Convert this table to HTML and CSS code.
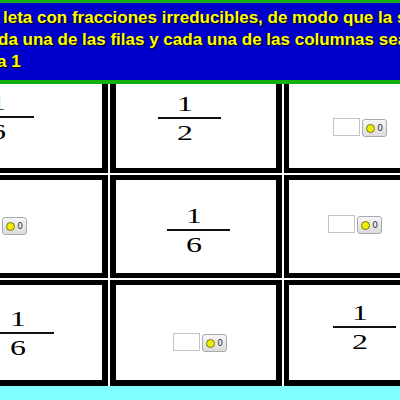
FILE: index.html
```html
<!DOCTYPE html>
<html lang="es">
<head>
<meta charset="utf-8">
<title>Fracciones</title>
<link rel="stylesheet" href="styles.css">
</head>
<body>
<div class="header">
  <div class="msg">
    <div class="line l1">leta con fracciones irreducibles, de modo que la suma de</div>
    <div class="line l2">da una de las filas y cada una de las columnas sea</div>
    <div class="line l3">a 1</div>
  </div>
</div>
<div class="board">
  <div class="cell c1 r1">
    <div class="frac f-r1c1"><span class="num">1</span><span class="bar"></span><span class="den">6</span></div>
  </div>
  <div class="cell c2 r1">
    <div class="frac f-r1c2"><span class="num">1</span><span class="bar"></span><span class="den">2</span></div>
  </div>
  <div class="cell c3 r1">
    <div class="widget w-r1c3"><span class="box"></span><span class="btn"><span class="dot"></span><span class="cnt">0</span></span></div>
  </div>

  <div class="cell c1 r2">
    <div class="widget w-r2c1"><span class="box"></span><span class="btn"><span class="dot"></span><span class="cnt">0</span></span></div>
  </div>
  <div class="cell c2 r2">
    <div class="frac f-r2c2"><span class="num">1</span><span class="bar"></span><span class="den">6</span></div>
  </div>
  <div class="cell c3 r2">
    <div class="widget w-r2c3"><span class="box"></span><span class="btn"><span class="dot"></span><span class="cnt">0</span></span></div>
  </div>

  <div class="cell c1 r3">
    <div class="frac f-r3c1"><span class="num">1</span><span class="bar"></span><span class="den">6</span></div>
  </div>
  <div class="cell c2 r3">
    <div class="widget w-r3c2"><span class="box"></span><span class="btn"><span class="dot"></span><span class="cnt">0</span></span></div>
  </div>
  <div class="cell c3 r3">
    <div class="frac f-r3c3"><span class="num">1</span><span class="bar"></span><span class="den">2</span></div>
  </div>
</div>
</body>
</html>
```

FILE: styles.css
```css
html, body {
  margin: 0;
  padding: 0;
  background: #80ffff;
  overflow: hidden;
}
body {
  width: 400px;
  height: 400px;
}
.header {
  height: 77px;
  background: #0000cc;
  border-top: 3px solid #10b010;
  border-bottom: 4px solid #10b010;
  overflow: hidden;
}
.msg {
  padding-top: 4px;
  font-family: "Liberation Sans", Arial, sans-serif;
  font-weight: bold;
  font-size: 17px;
  line-height: 22px;
  color: #ffff00;
  text-shadow: 1px 1px 1px #000;
  white-space: nowrap;
}
.l1 { margin-left: 3px; }
.l2 { margin-left: -2px; }
.l3 { margin-left: -3px; }

.board {
  display: grid;
  grid-template-columns: 108px 172px 1fr;
  grid-template-rows: 89px 103px 106px;
  column-gap: 2px;
  row-gap: 2px;
  background: #ffffff;
  overflow: hidden;
}
.cell {
  background: #ffffff;
  border: 0 solid #000;
  display: flex;
  align-items: flex-start;
  min-width: 0;
}
.c1 { border-right-width: 6px; }
.c2 { border-left-width: 6px; border-right-width: 6px; }
.c3 { border-left-width: 5px; }
.r1 { border-bottom-width: 5px; }
.r2 { border-top-width: 5px; border-bottom-width: 5px; }
.r3 { border-top-width: 5px; border-bottom-width: 6px; }

.frac {
  display: flex;
  flex-direction: column;
  align-items: center;
  width: 63px;
  flex: none;
  font-family: "Liberation Serif", "Times New Roman", serif;
  font-size: 22px;
  color: #000;
}
.num, .den {
  display: block;
  line-height: 22px;
  padding-right: 7px;
  transform: scaleX(1.45);
}
.num { height: 24px; }
.den { margin-top: 3px; }
.bar {
  display: block;
  width: 63px;
  height: 2px;
  background: #111;
}
.f-r1c1 { margin: 8px 0 0 -29px; }
.f-r1c2 { margin: 9px 0 0 42px; }
.f-r2c2 { margin: 25px 0 0 51px; }
.f-r3c1 { margin: 23px 0 0 -9px; }
.f-r3c3 { margin: 17px 0 0 44px; }

.widget {
  display: flex;
  align-items: flex-start;
  gap: 2px;
  flex: none;
}
.box {
  width: 25px;
  height: 16px;
  background: #fff;
  border: 1px solid #c4c4c4;
}
.btn {
  margin-top: 1px;
  width: 23px;
  height: 16px;
  border: 1px solid #a8a8b0;
  border-radius: 3px;
  background: linear-gradient(#f6f6f6, #dcdcdc);
  display: flex;
  align-items: center;
  justify-content: center;
  gap: 2px;
}
.dot {
  width: 7px;
  height: 7px;
  border-radius: 50%;
  background: #eeee00;
  border: 1px solid #77771a;
}
.cnt {
  font-family: "DejaVu Sans", sans-serif;
  font-size: 9px;
  line-height: 9px;
  color: #333;
}
.w-r1c3 { margin: 34px 0 0 44px; }
.w-r2c1 { margin: 36px 0 0 -27px; }
.w-r2c3 { margin: 35px 0 0 39px; }
.w-r3c2 { margin: 48px 0 0 57px; }
```
